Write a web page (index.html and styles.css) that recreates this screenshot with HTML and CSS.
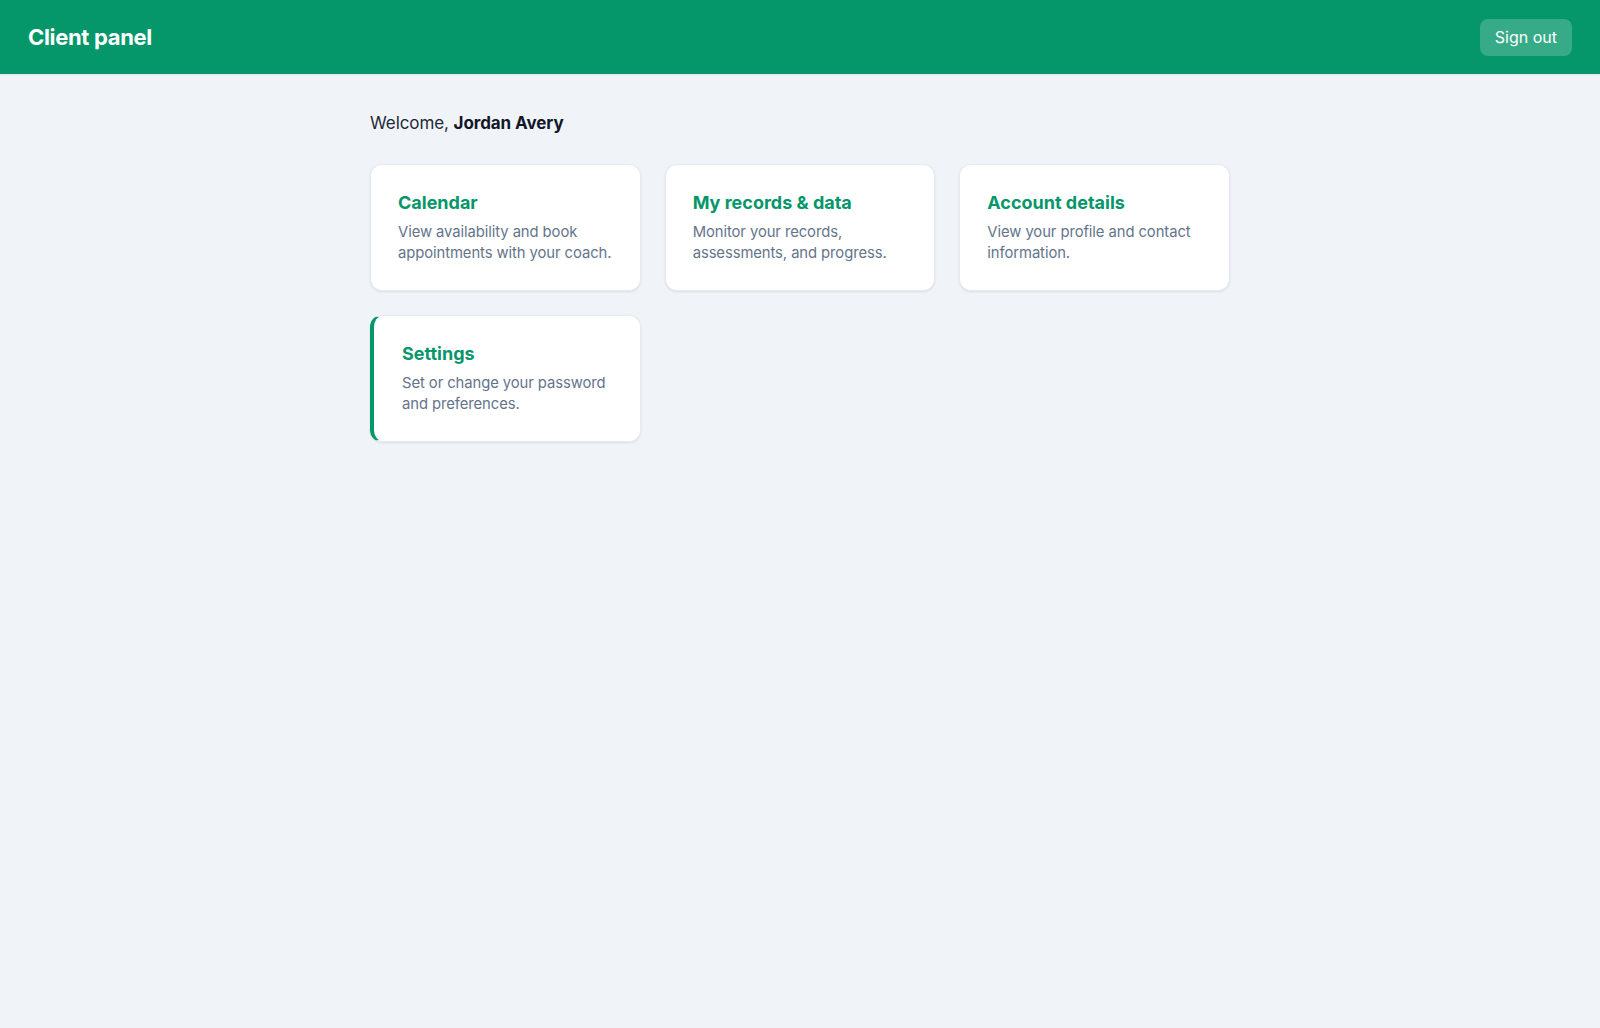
FILE: index.html
```html
<!DOCTYPE html>
<html lang="en">
<head>
<meta charset="utf-8">
<title>Client panel</title>
<link rel="stylesheet" href="styles.css">
</head>
<body>
<header class="topbar">
  <h1 class="brand">Client panel</h1>
  <button class="signout" type="button">Sign out</button>
</header>
<main class="main">
  <p class="welcome">Welcome, <strong>Jordan Avery</strong></p>
  <div class="grid">
    <a class="card" href="#">
      <h2 class="card-title">Calendar</h2>
      <p class="card-text">View availability and book appointments with your coach.</p>
    </a>
    <a class="card" href="#">
      <h2 class="card-title">My records &amp; data</h2>
      <p class="card-text">Monitor your records, assessments, and progress.</p>
    </a>
    <a class="card" href="#">
      <h2 class="card-title">Account details</h2>
      <p class="card-text">View your profile and contact information.</p>
    </a>
    <a class="card card-active" href="#">
      <h2 class="card-title">Settings</h2>
      <p class="card-text">Set or change your password and preferences.</p>
    </a>
  </div>
</main>
</body>
</html>
```
FILE: styles.css
```css
* { box-sizing: border-box; }
html, body { margin: 0; padding: 0; }
body {
  background: #f0f4f8;
  font-family: Inter, "Noto Sans", "Liberation Sans", sans-serif;
  color: #1f2937;
  min-height: 100vh;
}
.topbar {
  background: #059669;
  display: flex;
  align-items: center;
  justify-content: space-between;
  padding: 18px 28px;
  height: 74px;
  box-shadow: 0 1px 2px rgba(0,0,0,0.08);
}
.brand {
  margin: 0;
  color: #ffffff;
  font-size: 22px;
  font-weight: 700;
  letter-spacing: -0.015em;
}
.signout {
  font-family: inherit;
  font-size: 16px;
  line-height: 21px;
  color: #ffffff;
  background: rgba(255,255,255,0.2);
  border: 0;
  border-radius: 8px;
  padding: 8px 15px;
  height: 37px;
  cursor: pointer;
}
.main {
  max-width: 860px;
  margin: 0 auto;
  padding-top: 36px;
}
.welcome {
  margin: 0 0 28px;
  font-size: 17px;
  line-height: 26px;
  color: #1f2937;
  letter-spacing: -0.005em;
}
.welcome strong { color: #111827; font-weight: 700; }
.grid {
  display: grid;
  grid-template-columns: repeat(3, 1fr);
  gap: 24px;
}
.card {
  display: block;
  text-decoration: none;
  background: #ffffff;
  border: 1px solid #e6ebf0;
  border-radius: 12px;
  padding: 27px 24px 27px 27px;
  box-shadow: 0 1px 3px rgba(15,23,42,0.06), 0 1px 2px rgba(15,23,42,0.04);
}
.card-active {
  border-left: 4px solid #059669;
  padding-left: 28px;
}
.card-title {
  margin: 0 0 9px;
  font-size: 18px;
  line-height: 21px;
  font-weight: 700;
  color: #059669;
}
.card-text {
  margin: 0;
  font-size: 14.8px;
  line-height: 20.5px;
  color: #64748b;
  letter-spacing: -0.005em;
}
```
